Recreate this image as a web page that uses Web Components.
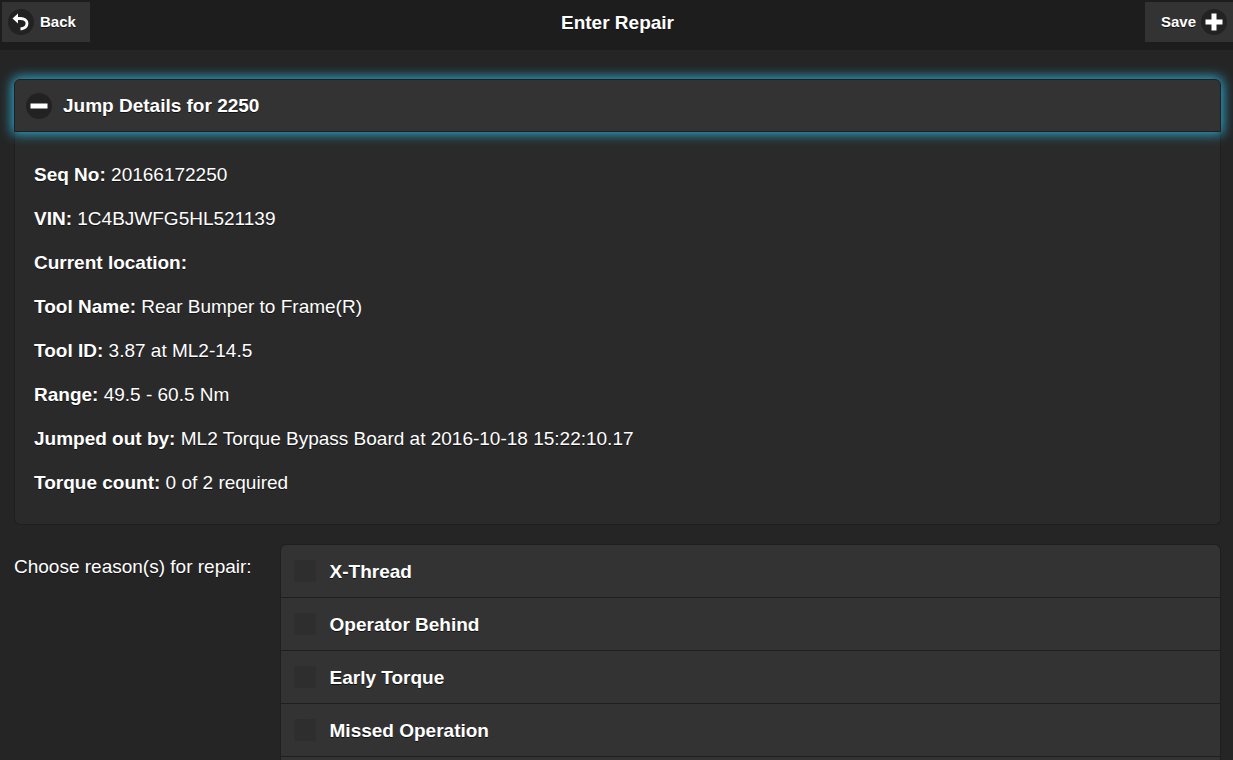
<!DOCTYPE html>
<html lang="en">
<head>
<meta charset="utf-8">
<meta name="viewport" content="width=device-width, initial-scale=1">
<title>Enter Repair</title>
<style>
html, body { margin: 0; height: 100%; }
body { background: #252525; color: #fff; font: 19px/25px "Liberation Sans", Arial, sans-serif; text-shadow: 0 1px 0 #111; }
</style>
</head>
<body>
<repair-page></repair-page>
<script>
class BaseElement extends HTMLElement {
  connectedCallback() {
    if (!this.shadowRoot) this.attachShadow({ mode: 'open' }).innerHTML = this.view();
  }
}

const ICONS = {
  back: '<path d="M5 5.500H8.500C12.500 5.500 15 7.500 15 10.500C15 13.500 12.500 15.500 8.500 16" fill="none" stroke="#fff" stroke-width="2.800"/><path d="M.5 5.500L6 .5V10.500Z" fill="#fff"/>',
  plus: '<path d="M6.500 .5h5v6h6v5h-6v6h-5v-6h-6v-5h6z" fill="#fff"/>',
  minus: '<path d="M.5 6.500h17v5H.5z" fill="#fff"/>'
};

class DiscIcon extends BaseElement {
  view() {
    return `<style>
      :host { display: grid; place-items: center; width: 26px; height: 26px; border-radius: 50%; background: #222; flex: none; }
      svg { display: block; }
    </style><svg width="18" height="18" viewBox="0 0 18 18" aria-hidden="true">${ICONS[this.getAttribute('name')]}</svg>`;
  }
}

class BarButton extends BaseElement {
  view() {
    const icon = `<disc-icon name="${this.getAttribute('icon')}"></disc-icon>`;
    const end = this.hasAttribute('icon-end');
    return `<style>
      :host { display: block; }
      button { display: flex; align-items: center; height: 40px; margin: 0; border: 0; background: #333; color: inherit; font: bold 15px/20px "Liberation Sans", Arial, sans-serif; text-shadow: inherit; }
      .start { gap: 6px; padding: 0 14px 0 6px; }
      .end { gap: 5px; padding: 0 6px 0 16px; }
    </style><button type="button" class="${end ? 'end' : 'start'}">${end ? '' : icon}<slot></slot>${end ? icon : ''}</button>`;
  }
}

class PageHeader extends BaseElement {
  view() {
    return `<style>
      :host { display: block; background: #1d1d1d; }
      header { display: grid; grid-template-columns: 1fr auto 1fr; height: 50px; padding: 2px 0 0 2px; box-sizing: border-box; }
      h1 { margin: 0; padding-top: 8px; font-size: 19px; line-height: 25px; }
      ::slotted([slot=start]) { justify-self: start; }
      ::slotted([slot=end]) { justify-self: end; }
    </style><header><slot name="start"></slot><h1><slot></slot></h1><slot name="end"></slot></header>`;
  }
}

class CollapsibleSet extends BaseElement {
  view() {
    return `<style>
      :host { display: block; }
      h2 { margin: 0; font-size: 19px; line-height: 25px; }
      button { display: flex; align-items: center; gap: 11px; width: 100%; height: 53px; padding: 0 11px; border: 1px solid #1f1f1f; border-radius: 6px 6px 0 0; background: #333; color: inherit; font: inherit; text-shadow: inherit; box-shadow: 0 0 12px 2px #2aabd2; position: relative; }
      .body { padding: 18px 19px 22px; background: #2a2a2a; border: 1px solid #1f1f1f; border-top: 0; border-radius: 0 0 6px 6px; }
    </style><h2><button type="button" aria-expanded="true"><disc-icon name="minus"></disc-icon><span>${this.getAttribute('heading')}</span></button></h2>
    <div class="body"><slot></slot></div>`;
  }
}

class DetailRow extends BaseElement {
  view() {
    return `<style>
      :host { display: block; }
      p { margin: 0; padding: 12px 0 7px; }
    </style><p><strong>${this.getAttribute('label')}:</strong> <slot></slot></p>`;
  }
}

class CheckOption extends BaseElement {
  view() {
    return `<style>
      :host { display: block; border-bottom: 1px solid #1f1f1f; }
      label { display: flex; align-items: center; gap: 14px; height: 52px; padding: 0 13px; font-weight: bold; }
      input { appearance: none; width: 22px; height: 22px; margin: 0; border-radius: 3px; background: #2e2e2e; }
      input:checked { background: #2aabd2; }
    </style><label><input type="checkbox"><span><slot></slot></span></label>`;
  }
}

class ReasonGroup extends BaseElement {
  view() {
    return `<style>
      :host { display: flex; min-height: 0; }
      .group { display: grid; grid-template-columns: 22% 1fr; width: 100%; }
      .legend { padding-top: 10px; }
      .options { background: #333; border: 1px solid #1f1f1f; border-bottom: 0; border-radius: 6px 6px 0 0; }
    </style><div class="group" role="group" aria-labelledby="legend"><div class="legend" id="legend">${this.getAttribute('legend')}</div><div class="options"><slot></slot></div></div>`;
  }
}

class RepairPage extends BaseElement {
  view() {
    return `<style>
      :host { display: flex; flex-direction: column; min-height: 100vh; }
      main { display: flex; flex-direction: column; flex: 1; gap: 19px; padding: 29px 12px 0 14px; }
      reason-group { flex: 1; }
    </style>
    <page-header><bar-button slot="start" icon="back">Back</bar-button>Enter Repair<bar-button slot="end" icon="plus" icon-end>Save</bar-button></page-header>
    <main>
      <collapsible-set heading="Jump Details for 2250">
        <detail-row label="Seq No">20166172250</detail-row>
        <detail-row label="VIN">1C4BJWFG5HL521139</detail-row>
        <detail-row label="Current location"></detail-row>
        <detail-row label="Tool Name">Rear Bumper to Frame(R)</detail-row>
        <detail-row label="Tool ID">3.87 at ML2-14.5</detail-row>
        <detail-row label="Range">49.5 - 60.5 Nm</detail-row>
        <detail-row label="Jumped out by">ML2 Torque Bypass Board at 2016-10-18 15:22:10.17</detail-row>
        <detail-row label="Torque count">0 of 2 required</detail-row>
      </collapsible-set>
      <reason-group legend="Choose reason(s) for repair:">
        <check-option>X-Thread</check-option>
        <check-option>Operator Behind</check-option>
        <check-option>Early Torque</check-option>
        <check-option>Missed Operation</check-option>
      </reason-group>
    </main>`;
  }
}

customElements.define('disc-icon', DiscIcon);
customElements.define('bar-button', BarButton);
customElements.define('page-header', PageHeader);
customElements.define('collapsible-set', CollapsibleSet);
customElements.define('detail-row', DetailRow);
customElements.define('check-option', CheckOption);
customElements.define('reason-group', ReasonGroup);
customElements.define('repair-page', RepairPage);
</script>
</body>
</html>
